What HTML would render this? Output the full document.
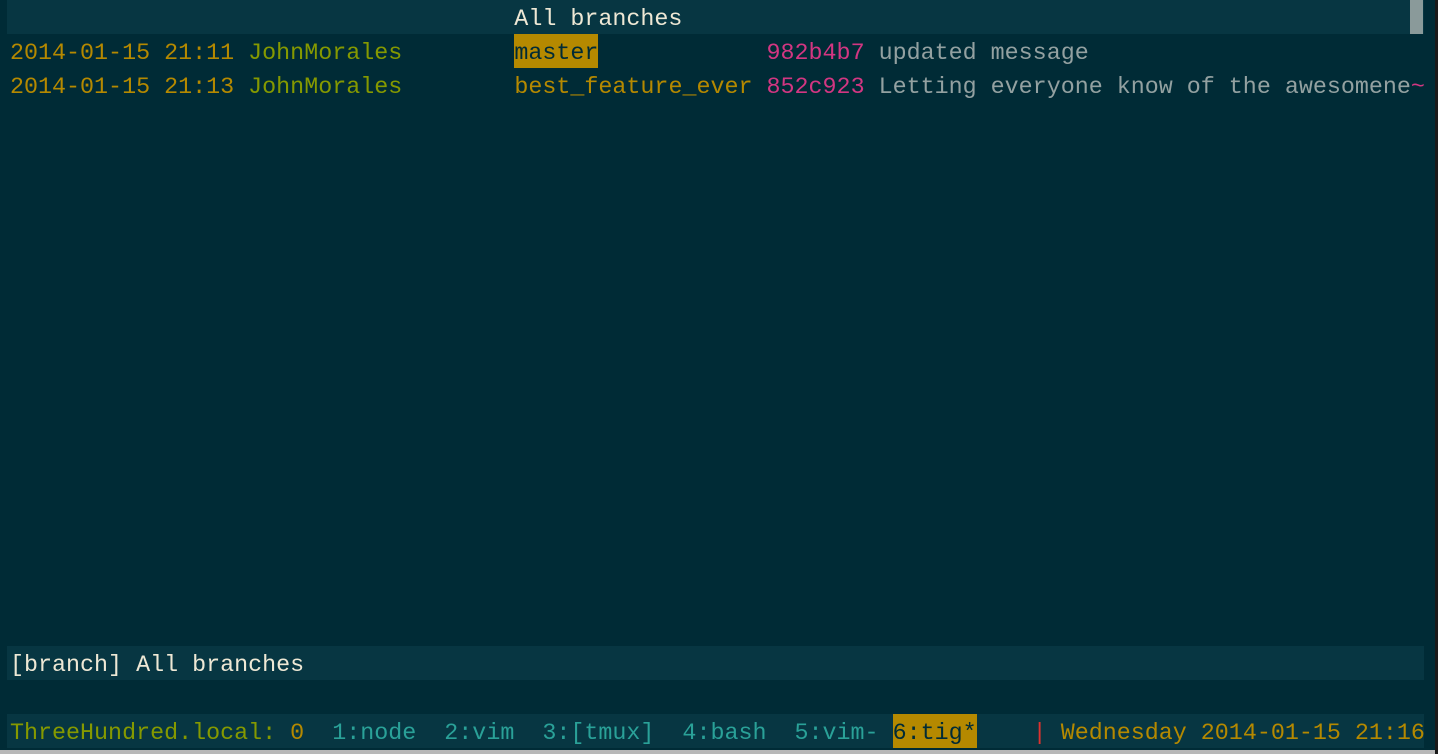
<!DOCTYPE html>
<html><head><style>
html,body{margin:0;padding:0;background:#002b36;width:1438px;height:754px;overflow:hidden}
.r{position:absolute;left:10px;height:34px;line-height:40px;font-family:"Liberation Mono",monospace;font-size:23.35px;white-space:pre;color:#93a1a1}
.bar{position:absolute;left:7px;width:1417px;height:34px;background:#073642}
.y{color:#b58900}.g{color:#859900}.m{color:#d33682}.w{color:#eee8d5}.c{color:#2aa198}.red{color:#dc322f}
.hl{background:#b58900;color:#002b36;display:inline-block;line-height:40px;height:34px;vertical-align:top}
</style></head><body>
<div class="bar" style="top:0"></div>
<div style="position:absolute;left:1410px;top:0;width:13px;height:34px;background:#8a9a9a"></div>
<div class="bar" style="top:646px"></div>
<div class="bar" style="top:714px"></div>
<div style="position:absolute;left:0;top:750px;width:1438px;height:4px;background:#b8b8b8"></div>
<div style="position:absolute;left:1435px;top:0;width:3px;height:754px;background:#1a1a1a"></div>
<div class="r w" style="top:0">                                    All branches</div>
<div class="r" style="top:34px"><span class="y">2014-01-15 21:11 </span><span class="g">JohnMorales</span>        <span class="hl">master</span>            <span class="m">982b4b7</span> updated message</div>
<div class="r" style="top:68px"><span class="y">2014-01-15 21:13 </span><span class="g">JohnMorales</span>        <span class="y">best_feature_ever</span> <span class="m">852c923</span> Letting everyone know of the awesomene<span class="m">~</span></div>
<div class="r w" style="top:646px">[branch] All branches</div>
<div class="r" style="top:714px"><span class="g">ThreeHundred.local: </span><span class="y">0</span>  <span class="c">1:node  2:vim  3:[tmux]  4:bash  5:vim- </span><span class="hl">6:tig*</span>    <span class="red">|</span> <span class="y">Wednesday 2014-01-15 21:16</span></div>
</body></html>
